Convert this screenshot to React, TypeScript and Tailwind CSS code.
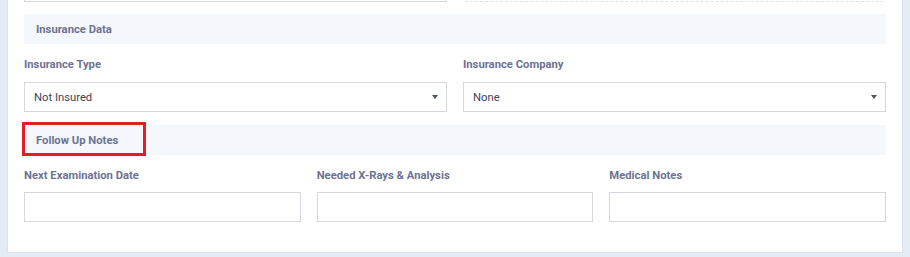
import React from "react";

const labelCls = "block text-[11.25px] leading-[16px] pt-[1px] font-bold text-[#6c7392]";
const headerCls = "h-[30px] bg-[#f4f7fb] flex items-center pl-[12px] pt-[2px] text-[11.25px] font-bold text-[#6c7392]";
const boxCls = "h-[30px] border border-[#d4d8de] bg-white";

function Select({ value }: { value: string }) {
  return (
    <div className={`${boxCls} flex items-center justify-between pl-[9px] pr-[8px]`}>
      <span className="text-[11.25px] text-[#3f4254] pt-[3px]">{value}</span>
      <svg width="6" height="4" viewBox="0 0 6 4">
        <path d="M0 0 H6 L3 4 Z" fill="#4a5560" />
      </svg>
    </div>
  );
}

export default function App() {
  return (
    <div className="w-[910px] h-[257px] overflow-hidden bg-[#e5ebf3] px-[7px]" style={{ fontFamily: "Roboto, 'Liberation Sans', sans-serif" }}>
      <div className="bg-white border border-[#dde3eb] border-t-0 px-[16px] pb-[30px] -mt-[28px]">
        <div className="grid grid-cols-2 gap-[16px]">
          <div className={boxCls} />
          <div className="flex items-end px-[2px]">
            <div className="w-full border-b border-dashed border-[#dde1e7]" />
          </div>
        </div>

        <div className={`${headerCls} mt-[12px]`}>Insurance Data</div>
        <div className="grid grid-cols-2 gap-[16px] mt-[12px]">
          <div>
            <label className={`${labelCls} mb-[9px]`}>Insurance Type</label>
            <Select value="Not Insured" />
          </div>
          <div>
            <label className={`${labelCls} mb-[9px]`}>Insurance Company</label>
            <Select value="None" />
          </div>
        </div>

        <div className="relative mt-[13px]">
          <div className={headerCls}>Follow Up Notes</div>
          <div className="absolute left-[-2px] top-[-3px] w-[124px] h-[34px] border-[3px] border-[#e51c23]" />
        </div>
        <div className="grid grid-cols-3 gap-[16px] mt-[12px]">
          <div>
            <label className={`${labelCls} mb-[8px]`}>Next Examination Date</label>
            <div className={boxCls} />
          </div>
          <div>
            <label className={`${labelCls} mb-[8px]`}>Needed X-Rays &amp; Analysis</label>
            <div className={boxCls} />
          </div>
          <div>
            <label className={`${labelCls} mb-[8px]`}>Medical Notes</label>
            <div className={boxCls} />
          </div>
        </div>
      </div>
    </div>
  );
}
